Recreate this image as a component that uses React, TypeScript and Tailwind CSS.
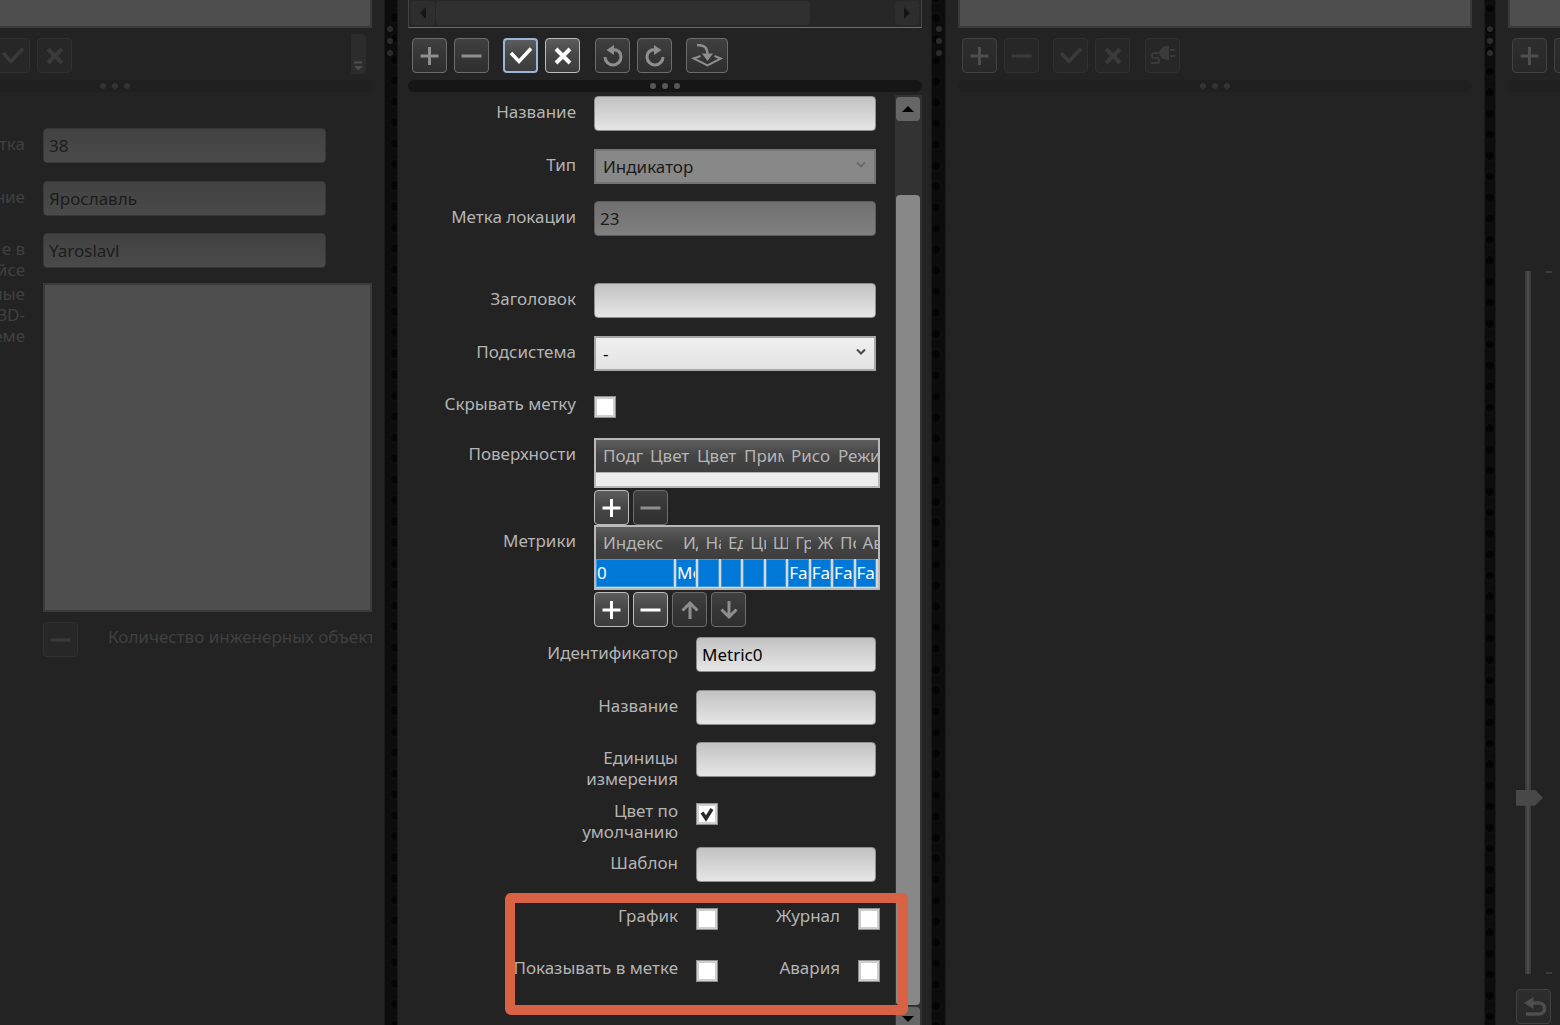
import clsx from 'clsx';
import type { ComponentProps, ReactNode } from 'react';

type Tone = 'active' | 'focused' | 'disabled' | 'dim' | 'faint';
type IconName = 'plus' | 'minus' | 'check' | 'cross' | 'undo' | 'redo' | 'place' | 'up' | 'down' | 'plug' | 'back';

const tones: Record<Tone, string> = {
  active: 'border-[#bcbcbc] bg-linear-to-b from-[#5c5c5c] via-[#464646] to-[#3c3c3c] text-white',
  focused: 'border-2 border-[#9ab5d9] bg-linear-to-b from-[#5c5c5c] via-[#464646] to-[#3c3c3c] text-white',
  disabled: 'border-[#6c6c6c] bg-linear-to-b from-[#404040] via-[#363636] to-[#2f2f2f] text-[#8e8e8e]',
  dim: 'border-[#414141] bg-linear-to-b from-[#2e2e2e] to-[#282828] text-[#4e4e4e]',
  faint: 'border-[#303030] bg-[#272727] text-[#3a3a3a]',
};

function Icon({ name }: { name: IconName }) {
  const line = { fill: 'none', stroke: 'currentColor', strokeWidth: 3 };
  const wide = name === 'place';
  return (
    <svg width={wide ? 32 : 24} height="24" viewBox={wide ? '0 0 32 24' : '0 0 24 24'} aria-hidden="true">
      {name === 'plus' && <path d="M11.500 3v18M2.500 12h18" {...line} />}
      {name === 'minus' && <path d="M1.500 12h20" {...line} />}
      {name === 'check' && <path d="M2 9l8 8.500L22 4.500" {...line} strokeWidth="3.500" />}
      {name === 'cross' && <path d="M5 5l14 14M19 5L5 19" {...line} strokeWidth="4" />}
      {name === 'undo' && (
        <>
          <path d="M11 5.500c6 0 9 3 9 7.500a8 8 0 0 1-16 0" {...line} />
          <path d="M5.500 6L13 1v10z" fill="currentColor" />
        </>
      )}
      {name === 'redo' && (
        <>
          <path d="M13 5.500c-6 0-9 3-9 7.500a8 8 0 0 0 16 0" {...line} />
          <path d="M18.500 6L11 1v10z" fill="currentColor" />
        </>
      )}
      {name === 'place' && (
        <>
          <path d="M6 1c8 0 10.500 3 10.500 10" {...line} strokeWidth="2.500" />
          <path d="M11 9.500h11L16.500 17z" fill="currentColor" />
          <path d="M9.500 12L2.500 14.500l14 7L30 14.500l-6.500-2.500" {...line} strokeWidth="2" />
        </>
      )}
      {name === 'up' && <path d="M12 21V5M4.500 12.500L12 5l7.500 7.500" {...line} />}
      {name === 'down' && <path d="M12 3v16M4.500 11.500L12 19l7.500-7.500" {...line} />}
      {name === 'plug' && (
        <>
          <path d="M18 2v14h-2c-4 0-7-3-8-7c1-4 4-7 8-7z" fill="currentColor" />
          <path d="M19 6h5M19 12h5" {...line} strokeWidth="2" />
          <path d="M10 9H3.500c-3.500 0-3.500 5 0 5h2c3.500 0 3.500 5 0 5H0" {...line} strokeWidth="2" />
        </>
      )}
      {name === 'back' && (
        <>
          <path d="M10 8h7a5 5 0 0 1 0 11H4" {...line} strokeWidth="3.500" />
          <path d="M2 8l9.500-6v12z" fill="currentColor" />
        </>
      )}
    </svg>
  );
}

function IconButton({ icon, label, tone, className }: { icon: IconName; label: string; tone: Tone; className?: string }) {
  return (
    <button
      type="button"
      aria-label={label}
      disabled={tone === 'disabled' || tone === 'faint'}
      className={clsx(
        'flex h-[35px] shrink-0 items-center justify-center rounded border',
        icon === 'place' ? 'w-[42px]' : 'w-[35px]',
        tones[tone],
        className,
      )}
    >
      <Icon name={icon} />
    </button>
  );
}

function Toolbar({ children, className }: { children: ReactNode; className?: string }) {
  return <div className={clsx('flex h-[52px] shrink-0 items-start gap-[7px] pt-2.5 pl-1', className)}>{children}</div>;
}

function Dots({ vertical, className }: { vertical?: boolean; className: string }) {
  return (
    <div className={clsx('flex items-center justify-center gap-1.5', vertical && 'flex-col')}>
      {[0, 1, 2].map((i) => (
        <span key={i} className={clsx('size-1.5 rounded-full', className)} />
      ))}
    </div>
  );
}

function Handle({ bar, dot }: { bar: string; dot: string }) {
  return (
    <div className={clsx('flex h-3 shrink-0 items-center justify-center rounded-full', bar)}>
      <Dots className={dot} />
    </div>
  );
}

function Splitter({ className }: { className?: string }) {
  return (
    <div
      className={clsx(
        'border-x border-[#1a1a1a] bg-[#0c0c0c] bg-[radial-gradient(circle,#040404_1px,#070707_4px,#101010_5px,transparent_6px)] bg-[size:14px_21px] pt-[26px]',
        className,
      )}
    >
      <Dots vertical className="bg-[#2c2c2c]" />
    </div>
  );
}

function Row({ label, htmlFor, children, className, wide, tight, dim }: {
  label: ReactNode;
  htmlFor?: string;
  children: ReactNode;
  className?: string;
  wide?: boolean;
  tight?: boolean;
  dim?: boolean;
}) {
  return (
    <div className={clsx('flex shrink-0 items-start gap-[18px]', className)}>
      <label
        htmlFor={htmlFor}
        className={clsx(
          'shrink-0 text-right leading-[21px] whitespace-nowrap',
          wide && 'w-[270px]',
          !wide && (dim ? 'w-[167px]' : 'w-[168px]'),
          !tight && 'pt-[5px]',
          dim ? 'text-[#404040]' : 'text-[#b4b4b4]',
        )}
      >
        {label}
      </label>
      <div className="min-w-0 flex-1">{children}</div>
    </div>
  );
}

const fieldTones = {
  light: 'w-full border-[#8f8f8f] from-[#c2c2c2] to-[#e6e6e6] text-black',
  locked: 'w-full border-[#5c5c5c] from-[#707070] to-[#808080] text-[#1c1c1c]',
  dim: 'w-[283px] border-[#383838] from-[#424242] to-[#4a4a4a] text-[#1c1c1c]',
};

function Field({ tone = 'light', ...props }: { tone?: keyof typeof fieldTones } & ComponentProps<'input'>) {
  return (
    <input
      type="text"
      disabled={tone !== 'light'}
      className={clsx('block h-[35px] rounded border bg-linear-to-b px-[5px]', fieldTones[tone])}
      {...props}
    />
  );
}

function Select({ id, value, disabled }: { id: string; value: string; disabled?: boolean }) {
  return (
    <div className="relative">
      <select
        id={id}
        disabled={disabled}
        className={clsx(
          'block h-[35px] w-full appearance-none border-2 px-[7px] opacity-100',
          disabled ? 'border-[#747474] bg-[#888888] text-[#1c1c1c]' : 'border-[#a8a8a8] bg-linear-to-b from-[#f0f0f0] to-[#e3e3e3] text-black',
        )}
      >
        <option>{value}</option>
      </select>
      <svg
        className={clsx('pointer-events-none absolute top-3 right-2.5', disabled ? 'text-[#6c6c6c]' : 'text-[#4a4a4a]')}
        width="10"
        height="8"
        viewBox="0 0 10 8"
        aria-hidden="true"
      >
        <path d="M1 1.500l4 4 4-4" fill="none" stroke="currentColor" strokeWidth="2" />
      </svg>
    </div>
  );
}

function Checkbox({ id, defaultChecked }: { id: string; defaultChecked?: boolean }) {
  return (
    <span className="relative mt-2 block size-[22px]">
      <input
        id={id}
        type="checkbox"
        defaultChecked={defaultChecked}
        className="peer block size-[22px] appearance-none border-3 border-[#cfcfcf] bg-white outline-1 -outline-offset-1 outline-[#8f8f8f]"
      />
      <svg className="pointer-events-none absolute inset-0 hidden peer-checked:block" viewBox="0 0 22 22" aria-hidden="true">
        <path d="M6 9.500l4 6L16 6" fill="none" stroke="#2a2a2a" strokeWidth="3.500" />
      </svg>
    </span>
  );
}

const surfaceColumns = ['Подг', 'Цвет', 'Цвет', 'Прим', 'Рисо', 'Режи'];

const metricColumns = [
  { title: 'Индекс', value: '0' },
  { title: 'Ид', value: 'Me' },
  { title: 'На', value: '' },
  { title: 'Ед', value: '' },
  { title: 'Цв', value: '' },
  { title: 'Ш', value: '' },
  { title: 'Гр', value: 'Fa' },
  { title: 'Ж', value: 'Fa' },
  { title: 'По', value: 'Fa' },
  { title: 'Ав', value: 'Fa' },
];

function GridTable({ children }: { children: ReactNode }) {
  return (
    <div className="border-2 border-[#b8b8b8] bg-[#ededed]">
      <table className="w-full table-fixed border-separate border-spacing-0">{children}</table>
    </div>
  );
}

function HeadCell({ children, className }: { children: ReactNode; className?: string }) {
  return (
    <th scope="col" className={clsx('h-8 overflow-hidden pl-[7px] text-left font-normal whitespace-nowrap text-[#b4b4b4]', className)}>
      {children}
    </th>
  );
}

const headRow = 'bg-linear-to-b from-[#5e5e5e] via-[#444444] to-[#3e3e3e]';

function LocationPanel() {
  return (
    <section className="flex min-w-0 justify-end overflow-hidden pr-3" aria-label="Локация">
      <div className="flex w-[514px] shrink-0 flex-col">
        <div className="h-7 shrink-0 border-2 border-t-0 border-[#393939] bg-[#4e4e4e]" />
        <Toolbar className="pl-[137px]">
          <IconButton icon="check" label="Применить" tone="faint" />
          <IconButton icon="cross" label="Отменить" tone="faint" />
          <button type="button" aria-label="Ещё" className="-mt-1 mr-1.5 ml-auto flex h-10 w-[15px] items-end justify-center rounded-r bg-[#2c2c2c] pb-[3px] text-[#4c4c4c]">
            <svg width="9" height="10" viewBox="0 0 9 10" aria-hidden="true">
              <path d="M0 1.500h8" stroke="currentColor" strokeWidth="2" />
              <path d="M0 5h9L4.500 9.500z" fill="currentColor" />
            </svg>
          </button>
        </Toolbar>
        <Handle bar="bg-[#202020]" dot="bg-[#333333]" />
        <form className="flex flex-col pt-9">
          <Row dim label="тка" htmlFor="loc-mark" className="h-[53px]">
            <Field id="loc-mark" tone="dim" defaultValue="38" />
          </Row>
          <Row dim label="ние" htmlFor="loc-name" className="h-13">
            <Field id="loc-name" tone="dim" defaultValue="Ярославль" />
          </Row>
          <Row dim label={<>е в<br />йсе</>} htmlFor="loc-title" className="h-[50px]">
            <Field id="loc-title" tone="dim" defaultValue="Yaroslavl" />
          </Row>
          <Row dim tight label={<>ные<br />3D-<br />еме</>} htmlFor="loc-scheme">
            <textarea id="loc-scheme" disabled className="block h-[329px] w-full resize-none border-2 border-[#3a3a3a] bg-[#4e4e4e]" />
            <div className="flex items-start gap-[30px] overflow-hidden pt-2.5">
              <IconButton icon="minus" label="Удалить" tone="faint" />
              <span className="pt-1 leading-[21px] whitespace-nowrap text-[#404040]">Количество инженерных объект</span>
            </div>
          </Row>
        </form>
      </div>
    </section>
  );
}

function MarkForm() {
  return (
    <form className="flex min-w-0 flex-1 flex-col pt-1 pr-[15px]">
      <Row label="Название" htmlFor="name" className="h-[53px] pr-1">
        <Field id="name" />
      </Row>
      <Row label="Тип" htmlFor="type" className="h-13 pr-1">
        <Select id="type" value="Индикатор" disabled />
      </Row>
      <Row label="Метка локации" htmlFor="location" className="h-[82px] pr-1">
        <Field id="location" tone="locked" defaultValue="23" />
      </Row>
      <Row label="Заголовок" htmlFor="title" className="h-[53px] pr-1">
        <Field id="title" />
      </Row>
      <Row label="Подсистема" htmlFor="subsystem" className="h-13 pr-1">
        <Select id="subsystem" value="-" />
      </Row>
      <Row label="Скрывать метку" htmlFor="hide-mark" className="h-[50px]">
        <Checkbox id="hide-mark" />
      </Row>
      <Row label="Поверхности" className="h-[87px]">
        <GridTable>
          <thead className={headRow}>
            <tr>
              {surfaceColumns.map((title, i) => (
                <HeadCell key={i}>{title}</HeadCell>
              ))}
            </tr>
          </thead>
          <tbody>
            <tr>
              <td colSpan={6} className="h-3.5 border-t border-[#b0b0b0]" />
            </tr>
          </tbody>
        </GridTable>
        <div className="flex gap-1 pt-0.5">
          <IconButton icon="plus" label="Добавить поверхность" tone="active" />
          <IconButton icon="minus" label="Удалить поверхность" tone="disabled" />
        </div>
      </Row>
      <Row label="Метрики" className="h-28">
        <GridTable>
          <thead className={headRow}>
            <tr>
              {metricColumns.map(({ title }) => (
                <HeadCell key={title} className={title === 'Индекс' ? 'w-20' : ''}>{title}</HeadCell>
              ))}
            </tr>
          </thead>
          <tbody>
            <tr className="bg-[#0078d7] text-white">
              {metricColumns.map(({ title, value }) => (
                <td key={title} className="h-[29px] border-r-2 border-b border-[#d8d8d8] p-0">
                  <div className="h-7 overflow-hidden border border-[#3d97e0] leading-[26px] whitespace-nowrap">{value}</div>
                </td>
              ))}
            </tr>
          </tbody>
        </GridTable>
        <div className="flex gap-1 pt-0.5">
          <IconButton icon="plus" label="Добавить метрику" tone="active" />
          <IconButton icon="minus" label="Удалить метрику" tone="active" />
          <IconButton icon="up" label="Выше" tone="disabled" />
          <IconButton icon="down" label="Ниже" tone="disabled" />
        </div>
      </Row>
      <Row wide label="Идентификатор" htmlFor="metric-id" className="h-[53px] pr-1">
        <Field id="metric-id" defaultValue="Metric0" />
      </Row>
      <Row wide label="Название" htmlFor="metric-name" className="h-13 pr-1">
        <Field id="metric-name" />
      </Row>
      <Row wide label={<>Единицы<br />измерения</>} htmlFor="metric-units" className="h-[53px] pr-1">
        <Field id="metric-units" />
      </Row>
      <Row wide label={<>Цвет по<br />умолчанию</>} htmlFor="metric-color" className="h-13">
        <Checkbox id="metric-color" defaultChecked />
      </Row>
      <Row wide label="Шаблон" htmlFor="metric-template" className="h-[53px] pr-1">
        <Field id="metric-template" />
      </Row>
      <div className="relative">
        <Row wide label="График" htmlFor="metric-chart" className="h-13">
          <div className="flex justify-between">
            <Checkbox id="metric-chart" />
            <div className="flex gap-[18px]">
              <label htmlFor="metric-log" className="pt-[5px] leading-[21px] text-[#b4b4b4]">Журнал</label>
              <Checkbox id="metric-log" />
            </div>
          </div>
        </Row>
        <Row wide label="Показывать в метке" htmlFor="metric-show" className="h-13">
          <div className="flex justify-between">
            <Checkbox id="metric-show" />
            <div className="flex gap-[18px]">
              <label htmlFor="metric-alarm" className="pt-[5px] leading-[21px] text-[#b4b4b4]">Авария</label>
              <Checkbox id="metric-alarm" />
            </div>
          </div>
        </Row>
        {/* Highlight frame */}
        <div className="pointer-events-none absolute -top-[7px] -right-7 -bottom-[11px] left-[97px] z-10 rounded-md border-10 border-[#d86243]" />
      </div>
    </form>
  );
}

function VerticalScrollbar() {
  return (
    <div className="mt-[3px] -mb-1.5 flex w-[27px] shrink-0 flex-col bg-[#333333] px-px pt-0.5 pr-0.5">
      <button type="button" aria-label="Вверх" className="flex h-6 shrink-0 items-center justify-center rounded-sm bg-[#666666]">
        <svg width="12" height="6" viewBox="0 0 12 6" aria-hidden="true"><path d="M0 6l6-6 6 6z" /></svg>
      </button>
      <div className="mt-[74px] mb-0.5 flex-1 rounded-sm bg-[#888888]" />
      <button type="button" aria-label="Вниз" className="flex h-6 shrink-0 items-center justify-center rounded-sm bg-[#666666]">
        <svg width="12" height="6" viewBox="0 0 12 6" aria-hidden="true"><path d="M0 0l6 6 6-6z" /></svg>
      </button>
    </div>
  );
}

function MarkPanel() {
  return (
    <section className="flex min-w-0 flex-col overflow-hidden pr-[9px] pl-2.5" aria-label="Метка">
      <div className="flex h-7 shrink-0 border-x border-b border-[#6b6b6b] border-x-[#444444] bg-[#272727] px-0.5 pt-px pb-0.5">
        <button type="button" aria-label="Влево" className="flex w-6 items-center justify-center rounded-sm bg-[#2e2e2e]">
          <svg width="6" height="12" viewBox="0 0 6 12" aria-hidden="true"><path d="M6 0v12L0 6z" fill="#151515" /></svg>
        </button>
        <div className="mr-[85px] ml-px flex-1 rounded-sm bg-[#303030]" />
        <button type="button" aria-label="Вправо" className="flex w-6 items-center justify-center rounded-sm bg-[#2e2e2e]">
          <svg width="6" height="12" viewBox="0 0 6 12" aria-hidden="true"><path d="M0 0v12l6-6z" fill="#151515" /></svg>
        </button>
      </div>
      <Toolbar>
        <IconButton icon="plus" label="Добавить" tone="disabled" />
        <IconButton icon="minus" label="Удалить" tone="disabled" />
        <IconButton icon="check" label="Применить" tone="focused" className="ml-[7px]" />
        <IconButton icon="cross" label="Отменить" tone="active" />
        <IconButton icon="undo" label="Назад" tone="disabled" className="ml-2" />
        <IconButton icon="redo" label="Вперёд" tone="disabled" />
        <IconButton icon="place" label="Разместить" tone="disabled" className="ml-[7px]" />
      </Toolbar>
      <Handle bar="bg-[#161616]" dot="bg-[#585858]" />
      <div className="flex min-h-0 flex-1">
        <MarkForm />
        <VerticalScrollbar />
      </div>
    </section>
  );
}

function ObjectPanel() {
  return (
    <section className="flex min-w-0 flex-col overflow-hidden px-3" aria-label="Объект">
      <div className="h-7 shrink-0 border-2 border-t-0 border-[#393939] bg-[#4e4e4e]" />
      <Toolbar>
        <IconButton icon="plus" label="Добавить" tone="dim" />
        <IconButton icon="minus" label="Удалить" tone="faint" />
        <IconButton icon="check" label="Применить" tone="faint" className="ml-[7px]" />
        <IconButton icon="cross" label="Отменить" tone="faint" />
        <IconButton icon="plug" label="Подключить" tone="faint" className="ml-2" />
      </Toolbar>
      <Handle bar="bg-[#202020]" dot="bg-[#333333]" />
    </section>
  );
}

function ScalePanel() {
  return (
    <section className="flex min-w-0 flex-col overflow-hidden pl-3" aria-label="Масштаб">
      <div className="h-7 shrink-0 border-b-2 border-l-2 border-[#393939] bg-[#4e4e4e]" />
      <Toolbar>
        <IconButton icon="plus" label="Добавить" tone="dim" />
        <IconButton icon="minus" label="Удалить" tone="dim" />
      </Toolbar>
      <div className="h-3 shrink-0 rounded-l-full bg-[#202020]" />
      <div className="mt-[179px] flex min-h-0 flex-1 gap-[3px] pl-2">
        <input
          type="range"
          aria-label="Масштаб"
          min={0}
          max={1000}
          defaultValue={245}
          className="w-[27px] appearance-none bg-[linear-gradient(to_right,transparent_9px,#3c3c3c_9px,#3c3c3c_11px,#4a4a4a_11px,#4a4a4a_13px,#3c3c3c_13px,#3c3c3c_15px,transparent_15px)] [direction:rtl] [writing-mode:vertical-lr] [&::-webkit-slider-thumb]:h-4 [&::-webkit-slider-thumb]:w-[27px] [&::-webkit-slider-thumb]:appearance-none [&::-webkit-slider-thumb]:bg-[#484848] [&::-webkit-slider-thumb]:[clip-path:polygon(0_0,70%_0,100%_50%,70%_100%,0_100%)]"
        />
        <div className="flex w-1.5 flex-col justify-between">
          <span className="h-0.5 bg-[#3c3c3c]" />
          <span className="h-0.5 bg-[#3c3c3c]" />
        </div>
      </div>
      <div className="shrink-0 pt-[15px] pb-px pl-2">
        <IconButton icon="back" label="Сбросить" tone="dim" />
      </div>
    </section>
  );
}

export default function App() {
  return (
    <main className="grid h-screen grid-cols-[minmax(0,384fr)_14px_minmax(0,533fr)_15px_minmax(0,538fr)_12px_minmax(0,64fr)] grid-rows-[minmax(0,1fr)] overflow-hidden bg-[#232323] font-['Noto_Sans','Open_Sans',sans-serif] text-[17px]">
      <LocationPanel />
      <Splitter className="bg-[position:3px_7px] pr-[3px]" />
      <MarkPanel />
      <Splitter className="bg-[position:-3px_8px]" />
      <ObjectPanel />
      <Splitter className="bg-[position:-2px_-2px]" />
      <ScalePanel />
    </main>
  );
}
